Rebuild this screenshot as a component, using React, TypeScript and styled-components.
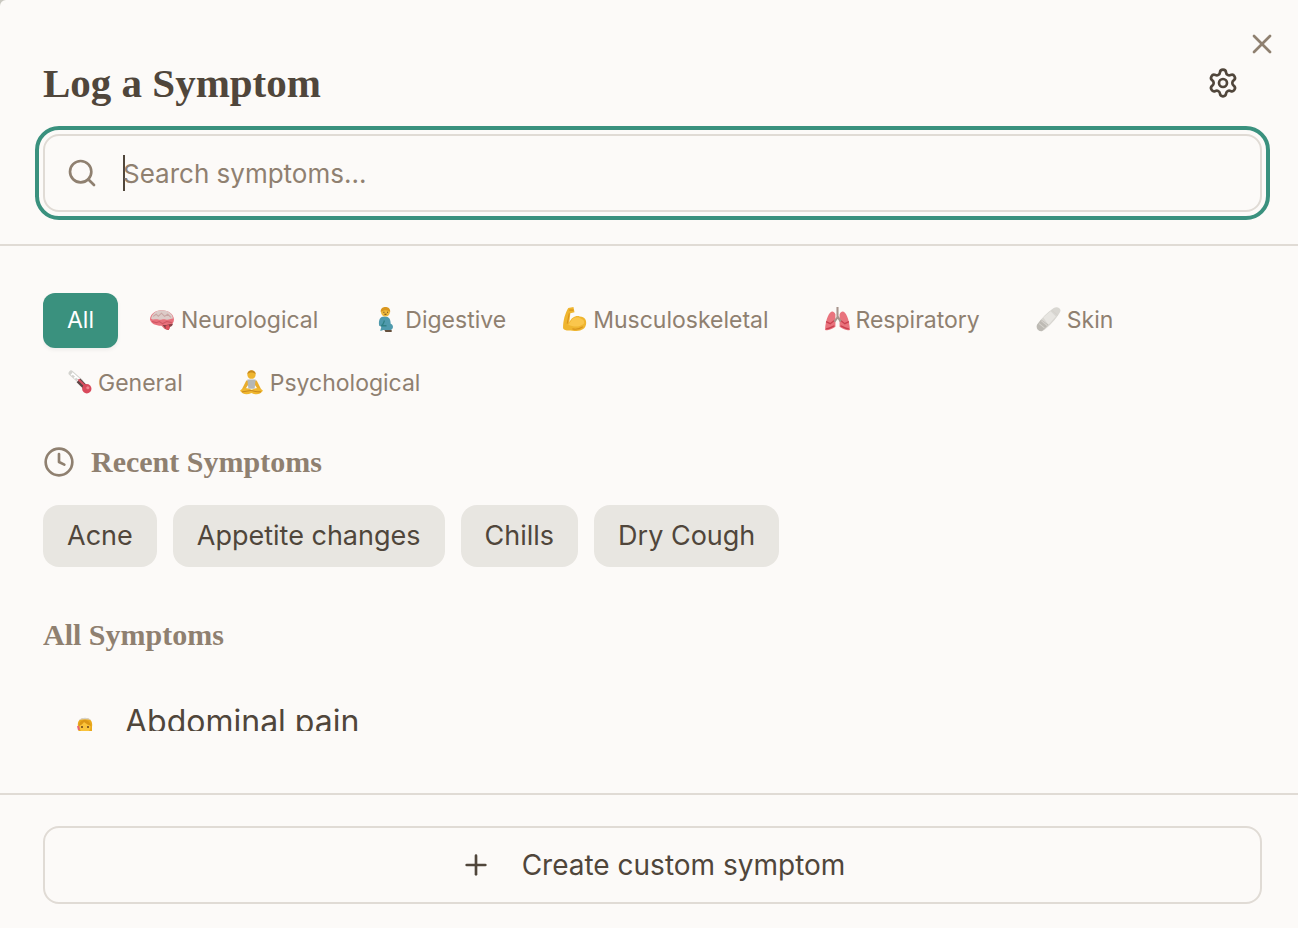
import React from "react";
import styled, { createGlobalStyle, css } from "styled-components";
import { Clock, Plus, Search, Settings, X } from "lucide-react";

const color = {
  page: "#fcfaf8",
  backdrop: "#c9c8c0",
  ink: "#50463b",
  muted: "#8f8070",
  line: "#e0dbd5",
  chip: "#e8e6e1",
  accent: "#3a917e",
};

const sans = `Inter, "Liberation Sans", sans-serif`;
const serif = `"Liberation Serif", serif`;

const GlobalStyle = createGlobalStyle`
  * { box-sizing: border-box; }
  body { margin: 0; background: ${color.backdrop}; color: ${color.ink}; font-family: ${sans}; }
  button, input { font: inherit; color: inherit; }
  h1, h2, ul { margin: 0; padding: 0; }
`;

const Dialog = styled.main`
  display: flex;
  flex-direction: column;
  height: 100vh;
  background: ${color.page};
  border-top-left-radius: 6px;
  overflow: hidden;
`;

const Header = styled.header`
  display: flex;
  flex-direction: column;
  padding: 28px 36px 32px 43px;
  border-bottom: 2px solid ${color.line};
`;

const TopBar = styled.div`
  display: flex;
  justify-content: flex-end;
  height: 32px;
  margin-right: -16px;
`;

const TitleRow = styled.div`
  display: flex;
  align-items: center;
  justify-content: space-between;
  height: 46px;
  padding-right: 23px;
  margin-bottom: 28px;
`;

const Title = styled.h1`
  font: 700 41px/46px ${serif};
`;

const IconButton = styled.button<{ $tone?: "muted" }>`
  display: flex;
  align-items: center;
  justify-content: center;
  width: 32px;
  height: 32px;
  padding: 0;
  border: 0;
  background: none;
  color: ${(p) => (p.$tone === "muted" ? color.muted : color.ink)};
`;

const SearchBox = styled.label`
  display: flex;
  align-items: center;
  height: 78px;
  padding: 0 21px;
  border: 2px solid ${color.line};
  border-radius: 16px;
  outline: 4px solid ${color.accent};
  outline-offset: 4px;
  color: ${color.muted};
`;

const Caret = styled.span`
  width: 2px;
  height: 36px;
  margin-left: 25px;
  background: ${color.ink};
`;

const SearchInput = styled.input`
  flex: 1;
  min-width: 0;
  padding: 2px 0 0;
  margin-left: -2px;
  border: 0;
  outline: 0;
  background: none;
  font-size: 26px;
  line-height: 36px;
  &::placeholder {
    color: ${color.muted};
    opacity: 1;
  }
`;

const Body = styled.div`
  flex: 1;
  min-height: 0;
  display: flex;
  flex-direction: column;
  padding: 47px 36px 62px 43px;
`;

const Scroller = styled.div`
  flex: 1;
  min-height: 0;
  overflow: hidden;
`;

const Tabs = styled.nav`
  display: flex;
  flex-wrap: wrap;
  gap: 8px;
  margin-bottom: 33px;
`;

const Tab = styled.button<{ $active?: boolean }>`
  display: flex;
  align-items: center;
  gap: 6px;
  height: 55px;
  padding: 0 24px 2px;
  border: 0;
  border-radius: 12px;
  background: none;
  color: ${color.muted};
  font-size: 23px;
  ${(p) =>
    p.$active &&
    css`
      background: ${color.accent};
      color: #fff;
      box-shadow: 0 2px 4px rgba(0, 0, 0, 0.06);
    `}
`;

const SectionTitle = styled.h2`
  display: flex;
  align-items: center;
  gap: 16px;
  height: 36px;
  color: ${color.muted};
  font: 700 30px/36px ${serif};
`;

const Chips = styled.div`
  display: flex;
  flex-wrap: wrap;
  gap: 16px;
  margin: 25px 0 50px;
`;

const Chip = styled.button`
  height: 62px;
  padding: 0 24px 2px;
  border: 0;
  border-radius: 16px;
  background: ${color.chip};
  font-size: 27px;
`;

const SymptomList = styled.ul`
  list-style: none;
  padding-top: 32px;
`;

const SymptomRow = styled.button`
  display: flex;
  align-items: center;
  gap: 26px;
  width: 100%;
  height: 72px;
  padding: 0 28px;
  border: 0;
  background: none;
  font-size: 32px;
`;

const Footer = styled.footer`
  padding: 31px 36px 24px 43px;
  border-top: 2px solid ${color.line};
`;

const CreateButton = styled.button`
  display: flex;
  align-items: center;
  justify-content: center;
  gap: 30px;
  width: 100%;
  height: 78px;
  border: 2px solid ${color.line};
  border-radius: 16px;
  background: none;
  font-size: 28px;
`;

const Glyph = ({ children }: { children: React.ReactNode }) => (
  <svg width="25" height="25" viewBox="0 0 24 24" aria-hidden="true">
    {children}
  </svg>
);

const Brain = () => (
  <Glyph>
    <path d="M0 12C0 7 5 3 11 3c7 0 12 4 12 9 0 3-2 5-4 6l-1 4-4-1-3-3C5 18 1 16 0 12z" fill="#e8717c" />
    <path d="M1 11C2 6 6 3 11 3c6 0 11 3 11 8-3 0-4 2-7 1s-4 1-7 0-5 1-7-1z" fill="#dccbc8" />
    <path d="M3 9l3-2 2 2 3-3 3 3 3-2 3 3" fill="none" stroke="#c9a5a3" strokeWidth="1" />
    <path d="M2 14l4 1 3-1 3 2 4-2 5 1" fill="none" stroke="#cf5562" strokeWidth="1" />
    <path d="M12 17c3 1 6-1 10-1 0 2-2 3-3 3l-1 3-3-1z" fill="#8a4147" />
    <path d="M15 18l3-1 1 3-1 2-3-1z" fill="#e0525f" />
  </Glyph>
);

const Person = () => (
  <Glyph>
    <path d="M6 23l1-4-2-1c-1-6 1-9 5-9 5 0 6 3 6 7 3 1 3 5 0 6H9z" fill="#4f9aad" />
    <path d="M10 13c-1 3-1 4-3 5h5" fill="none" stroke="#2f8085" strokeWidth="1.3" />
    <path d="M10 22h7v2h-6z" fill="#65503d" />
    <circle cx="11" cy="5" r="4.2" fill="#eeb83b" />
    <path d="M6.500 5C6 1 9 0 11 0s5 1 4.500 5C14 3 10 2 6.500 5z" fill="#d9961e" />
    <path d="M9 5h1M12.500 5h1M10 7h2" stroke="#65431d" />
  </Glyph>
);

const Muscle = () => (
  <Glyph>
    <path d="M6 1l5-1 1 5-4 1-1 9c2-5 6-7 10-6 5 0 7 4 6 8-1 5-6 6-11 6-5 0-11 0-11-3C1 13 3 6 6 1z" fill="#efb52f" />
    <path d="M9 13c2-3 6-4 9-2 3 1 4 3 3 5-5 4-10 3-15 1z" fill="#fac64c" />
    <path d="M7 6l-2 10M7 3l4 0M10 21c4 1 7 0 10-2" fill="none" stroke="#d8921c" strokeWidth="1" />
  </Glyph>
);

const Lungs = () => (
  <Glyph>
    <path d="M10 7C7 0 1 7 0 22c4 1 7-1 10-3zM14 7c3-7 9 0 10 15-4 1-7-1-10-3z" fill="#e9737d" />
    <path d="M1 14l4 2 4-3M23 14l-4 2-4-3M1 21c3 0 6-2 8-3M23 21c-3 0-6-2-8-3" fill="none" stroke="#c9404f" strokeWidth="1.2" />
    <path d="M12 0v10l-3 4M12 9l3 5" fill="none" stroke="#a7948c" strokeWidth="2" />
  </Glyph>
);

const Bandage = () => (
  <Glyph>
    <path d="M1 17C5 11 11 5 17 1c4-2 8 1 6 4C19 12 13 18 8 22c-4 3-9-1-7-5z" fill="#d9d7d2" />
    <path d="M7 10l7-6 5 5-7 8z" fill="#e7e5e1" />
    <path d="M1 17l4-5 7 5-6 6c-3 1-6-2-5-6z" fill="#bdbab4" />
    <path d="M3 16l5 4M5 13l6 5M15 3l6 5" stroke="#d5d2cd" />
  </Glyph>
);

const Thermometer = () => (
  <Glyph>
    <path d="M4 3l9 8" stroke="#d3d3cf" strokeWidth="5" strokeLinecap="round" />
    <path d="M5 3l8 7M4 5l2-2M7 8l2-2M10 11l2-2" stroke="#fff" strokeWidth="1.5" />
    <path d="M11 10l8 8" stroke="#5d4545" strokeWidth="5" />
    <path d="M11 9l8 8" stroke="#d95060" strokeWidth="2" />
    <circle cx="19" cy="18" r="4.500" fill="#d94a5c" />
    <circle cx="20" cy="17" r="1.500" fill="#ee858d" />
  </Glyph>
);

const Meditation = () => (
  <Glyph>
    <path d="M7 10h10l4 8-2 2-4-6H9l-4 6-2-2z" fill="#e9ad2c" />
    <path d="M8 9h8l-1 9H9z" fill="#b5b7b5" />
    <path d="M1 20c3-4 7-3 11-1 4-2 8-3 11 1-3 4-7 4-11 2-4 2-8 2-11-2z" fill="#f0b72f" />
    <path d="M3 21c5 0 7-2 10-1s6 1 8 1" fill="none" stroke="#c98a1c" />
    <circle cx="12" cy="4.500" r="4" fill="#efb52f" />
    <path d="M8 4c0-5 8-5 8 0-2-2-6-2-8 0z" fill="#c88a1d" />
  </Glyph>
);

const Face = () => (
  <svg width="28" height="28" viewBox="0 0 28 28" aria-hidden="true">
    <path d="M7 20c-1-6 2-9 7-9s8 3 7 9v8H8z" fill="#e9a91d" />
    <ellipse cx="14" cy="20" rx="5.500" ry="6" fill="#fac33b" />
    <path d="M8 19c2-1 4-2 5-4 2 2 5 3 7 4-1-4-3-6-6-6s-6 2-6 6z" fill="#dc9614" />
    <path d="M8 13c3-3 9-3 12 0-4-1-8-1-12 0z" fill="#d7d3cd" />
    <path d="M11 19v2M17 19v2" stroke="#65401c" strokeWidth="1.500" />
    <path d="M7 19l1 4" stroke="#ea6675" strokeWidth="2" />
  </svg>
);

const categories = [
  { label: "Neurological", icon: <Brain /> },
  { label: "Digestive", icon: <Person /> },
  { label: "Musculoskeletal", icon: <Muscle /> },
  { label: "Respiratory", icon: <Lungs /> },
  { label: "Skin", icon: <Bandage /> },
  { label: "General", icon: <Thermometer /> },
  { label: "Psychological", icon: <Meditation /> },
];

const recent = ["Acne", "Appetite changes", "Chills", "Dry Cough"];

export default function App() {
  return (
    <>
      <GlobalStyle />
      <Dialog>
        <Header>
          <TopBar>
            <IconButton $tone="muted" aria-label="Close">
              <X size={32} strokeWidth={2} />
            </IconButton>
          </TopBar>
          <TitleRow>
            <Title>Log a Symptom</Title>
            <IconButton aria-label="Settings">
              <Settings size={32} />
            </IconButton>
          </TitleRow>
          <SearchBox>
            <Search size={32} strokeWidth={2} />
            <Caret />
            <SearchInput type="text" aria-label="Search symptoms" placeholder="Search symptoms..." />
          </SearchBox>
        </Header>
        <Body>
          <Scroller>
            <Tabs aria-label="Categories">
              <Tab $active>All</Tab>
              {categories.map((c) => (
                <Tab key={c.label}>
                  {c.icon}
                  {c.label}
                </Tab>
              ))}
            </Tabs>
            <SectionTitle>
              <Clock size={32} strokeWidth={2} />
              Recent Symptoms
            </SectionTitle>
            <Chips>
              {recent.map((name) => (
                <Chip key={name}>{name}</Chip>
              ))}
            </Chips>
            <SectionTitle>All Symptoms</SectionTitle>
            <SymptomList>
              <li>
                <SymptomRow>
                  <Face />
                  Abdominal pain
                </SymptomRow>
              </li>
            </SymptomList>
          </Scroller>
        </Body>
        <Footer>
          <CreateButton>
            <Plus size={32} strokeWidth={2} />
            Create custom symptom
          </CreateButton>
        </Footer>
      </Dialog>
    </>
  );
}
